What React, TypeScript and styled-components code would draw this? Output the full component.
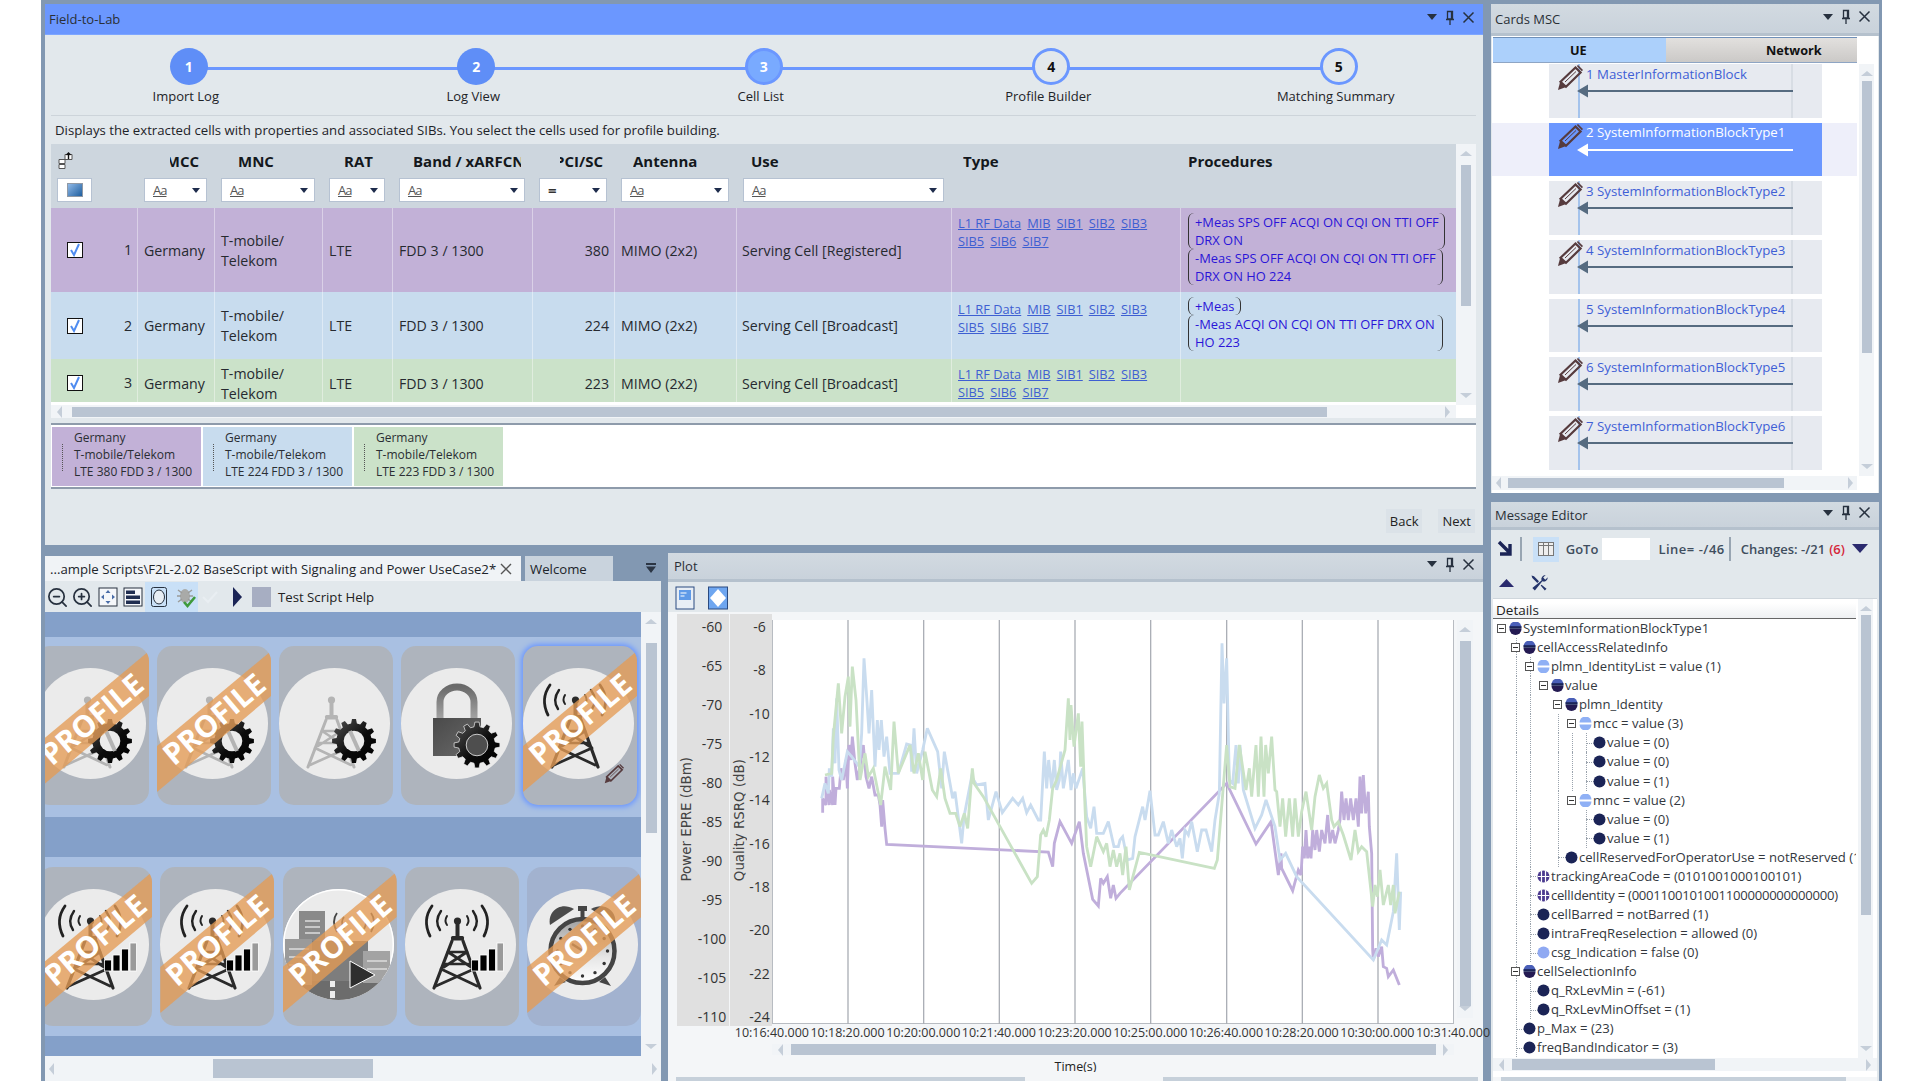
import React from "react";
import styled, { createGlobalStyle } from "styled-components";
import { ZoomIn, ZoomOut } from "lucide-react";

const FONT = `"Open Sans", "Noto Sans", "Liberation Sans", sans-serif`;

const Global = createGlobalStyle`
  html, body { margin: 0; padding: 0; background: #fff; }
  body { font-family: ${FONT}; font-size: 13px; color: #222; overflow: hidden; }
  * { box-sizing: border-box; }
`;

const Page = styled.div`
  width: 1922px; height: 1081px; overflow: hidden; background: #fff; padding-left: 41px;
`;
const Frame = styled.div`
  width: 1841px; height: 1081px; background: #8298b2; padding: 4px 3px 0 4px;
  display: grid; grid-template-columns: 1438px 388px; column-gap: 8px;
`;
const LeftColumn = styled.div`
  display: flex; flex-direction: column; gap: 8px; min-width: 0;
`;
const RightColumn = styled.div`
  display: flex; flex-direction: column; gap: 9px; min-width: 0;
`;
const BottomRow = styled.div`
  display: grid; grid-template-columns: 616px 815px; column-gap: 7px; height: 528px;
`;

/* ---------- panel chrome ---------- */
const Panel = styled.section<{ $h?: number }>`
  display: flex; flex-direction: column; background: #e2e8ec;
  ${(p) => (p.$h ? `height: ${p.$h}px;` : "flex: 1;")}
  min-height: 0;
`;
const TitleBar = styled.header<{ $active?: boolean; $h?: number; $pl?: number }>`
  flex: none; height: ${(p) => p.$h ?? 29}px; display: flex; align-items: center; justify-content: space-between;
  padding: 0 8px 0 ${(p) => p.$pl ?? 4}px; font-size: 13px; color: #2a2f36;
  background: ${(p) => (p.$active ? "#6b97ff" : "linear-gradient(#d2dae1, #c9d2db)")};
  border-bottom: ${(p) => (p.$active ? "1px solid #7ea6ff" : "3px solid #b5c1cd")};
`;
const Controls = styled.div`
  display: flex; align-items: center; gap: 7px; margin-top: -4px;
`;
function PanelControls() {
  return (
    <Controls>
      <svg width="12" height="8" viewBox="0 0 12 8"><path d="M1 1h10L6 7z" fill="#27313f" /></svg>
      <svg width="10" height="15" viewBox="0 0 10 15">
        <path d="M2.5 1.5h5v7.5h-5zM1 9.5h8M5 10v5M6.5 2v7" fill="none" stroke="#27313f" strokeWidth="1.3" />
      </svg>
      <svg width="13" height="13" viewBox="0 0 13 13">
        <path d="M1.5 1.5l10 10M11.5 1.5l-10 10" stroke="#27313f" strokeWidth="1.5" />
      </svg>
    </Controls>
  );
}

/* ---------- generic scrollbars ---------- */
const VBar = styled.div<{ $w: number; $bg?: string }>`
  flex: none; width: ${(p) => p.$w}px; display: flex; flex-direction: column; align-items: center;
  padding: 7px 0; background: ${(p) => p.$bg ?? "#f1f4f7"};
`;
const TriV = styled.i<{ $down?: boolean }>`
  flex: none; width: 0; height: 0; border-left: 6px solid transparent; border-right: 6px solid transparent;
  ${(p) => (p.$down ? "border-top: 5px solid #c5ced9;" : "border-bottom: 5px solid #c5ced9;")}
`;
const TriH = styled.i<{ $right?: boolean }>`
  flex: none; width: 0; height: 0; border-top: 6px solid transparent; border-bottom: 6px solid transparent;
  ${(p) => (p.$right ? "border-left: 5px solid #c5ced9;" : "border-right: 5px solid #c5ced9;")}
`;
const VTrack = styled.div`
  flex: 1; width: 100%; display: flex; flex-direction: column; align-items: center; min-height: 0;
`;
const VThumb = styled.div<{ $top: number; $h: number; $w: number }>`
  margin-top: ${(p) => p.$top}px; height: ${(p) => p.$h}px; width: ${(p) => p.$w}px; background: #b9c4d2;
`;
const HBar = styled.div<{ $h: number; $pad?: number }>`
  flex: none; height: ${(p) => p.$h}px; display: flex; align-items: center; padding: 0 ${(p) => p.$pad ?? 4}px;
  background: #f1f4f7;
`;
const HTrack = styled.div`
  flex: 1; height: 100%; display: flex; align-items: center; min-width: 0;
`;
const HThumb = styled.div<{ $left: number; $w: number; $h: number }>`
  margin-left: ${(p) => p.$left}px; width: ${(p) => p.$w}px; height: ${(p) => p.$h}px; background: #b9c4d2;
`;
function VScroll(p: { w: number; top: number; h: number; tw: number; bg?: string }) {
  return (
    <VBar $w={p.w} $bg={p.bg}>
      <TriV />
      <VTrack><VThumb $top={p.top} $h={p.h} $w={p.tw} /></VTrack>
      <TriV $down />
    </VBar>
  );
}
function HScroll(p: { h: number; left: number; w: number; th: number; pad?: number }) {
  return (
    <HBar $h={p.h} $pad={p.pad}>
      <TriH />
      <HTrack><HThumb $left={p.left} $w={p.w} $h={p.th} /></HTrack>
      <TriH $right />
    </HBar>
  );
}

/* ---------- stepper ---------- */
const Stepper = styled.div`
  flex: none; height: 80px; display: grid; grid-template-columns: repeat(5, 287.5px);
`;
const Step = styled.div<{ $first?: boolean }>`
  position: relative; display: flex; flex-direction: column; align-items: center; padding-top: 13px;
  &::before {
    content: ""; display: ${(p) => (p.$first ? "none" : "block")}; position: absolute;
    left: -143.75px; width: 287.5px; top: 31.5px; height: 3px; background: #6b97ff;
  }
`;
const StepDot = styled.div<{ $kind: "done" | "now" | "todo" }>`
  position: relative; z-index: 1; width: 38px; height: 37px; border-radius: 50%; display: flex; align-items: center; justify-content: center;
  font-weight: 700; font-size: 14px;
  color: ${(p) => (p.$kind === "todo" ? "#111" : "#fff")};
  background: ${(p) => (p.$kind === "done" ? "#5f8ef7" : p.$kind === "now" ? "#79aaff" : "#e2e8ec")};
  border: ${(p) => (p.$kind === "done" ? "0" : "3px solid #6b97ff")};
`;
const StepLabel = styled.div`
  margin: 2px 6px 0 0; line-height: 18px; font-size: 13px; color: #1e2328; white-space: nowrap;
`;
const Rule = styled.div`
  flex: none; height: 1px; margin: 0 7px 0 6px; background: #cdd4da;
`;
const Description = styled.div`
  flex: none; height: 28px; line-height: 28px; padding-left: 10px; font-size: 13.2px; color: #1e2328; white-space: nowrap;
`;

/* ---------- table ---------- */
const COLS = "86px 77px 108px 70px 140px 82px 122px 215px 229px 276px";
const TableArea = styled.div`
  flex: none; margin: 0 7px 0 6px; background: #fff; display: flex; flex-direction: column;
`;
const TableWrap = styled.div`
  display: flex; height: 261px;
`;
const TableGrid = styled.div`
  width: 1405px; height: 258px; overflow: hidden; display: flex; flex-direction: column;
`;
const TableHScroll = styled.div`
  width: 1405px;
`;
const HeadRow = styled.div`
  flex: none; height: 64px; display: grid; grid-template-columns: ${COLS}; background: #cdd6de;
`;
const HeadCell = styled.div`
  display: flex; flex-direction: column; min-width: 0;
`;
const HeadLabelBox = styled.div<{ $left: number; $w?: number; $end?: boolean }>`
  height: 34px; margin-left: ${(p) => p.$left}px; ${(p) => (p.$w ? `width: ${p.$w}px;` : "")}
  display: flex; align-items: center; justify-content: ${(p) => (p.$end ? "flex-end" : "flex-start")};
  overflow: hidden; white-space: nowrap; font-weight: 700; font-size: 15px; color: #14181c;
`;
const HeadLabelText = styled.span`
  flex: none;
`;
const Filter = styled.div`
  height: 24px; margin-left: 7px; width: calc(100% - 14px); background: #fff; border: 1px solid #b6c2d2;
  display: flex; align-items: center; justify-content: space-between; padding: 0 6px 0 8px;
`;
const FilterGlyph = styled.span`
  font-size: 13px; letter-spacing: -1px; color: #555; text-decoration: underline; line-height: 13px;
`;
const FilterEq = styled.span`
  font-weight: 700; font-size: 15px; color: #333; line-height: 12px;
`;
const Drop = styled.i`
  width: 0; height: 0; border-left: 4px solid transparent; border-right: 4px solid transparent; border-top: 5px solid #1e2c4c;
`;
const SelectAll = styled.div`
  height: 24px; width: 35px; margin-left: 6px; background: #fff; border: 1px solid #b6c2d2;
  display: flex; align-items: center; justify-content: center;
`;
const SelectSwatch = styled.div`
  width: 16px; height: 14px; background: linear-gradient(135deg, #8fb8e6, #1f5f9f); border: 1px solid #9099a5;
`;
const HeadIcon = styled.div`
  height: 34px; padding: 8px 0 0 7px;
`;
const Row = styled.div<{ $bg: string; $h: number }>`
  flex: none; height: ${(p) => p.$h}px; display: grid; grid-template-columns: ${COLS}; background: ${(p) => p.$bg};
`;
const Cell = styled.div<{ $pad?: number; $right?: boolean; $sep?: boolean }>`
  display: flex; align-items: center; min-width: 0; white-space: nowrap; font-size: 14.2px; color: #262a30;
  padding: 1px ${(p) => (p.$right ? 5 : 0)}px 0 ${(p) => p.$pad ?? 6}px;
  justify-content: ${(p) => (p.$right ? "flex-end" : "flex-start")};
  border-left: ${(p) => (p.$sep === false ? "0" : "1px solid rgba(255,255,255,.4)")};
  line-height: 20px;
`;
const CheckCell = styled(Cell)`
  justify-content: space-between; padding: 0 5px 0 16px;
`;
const CheckBox = styled.div`
  width: 16px; height: 16px; background: #fff; border: 1px solid #111; display: flex; align-items: center; justify-content: center;
`;
const LinksCell = styled.div<{ $top: number }>`
  padding: ${(p) => p.$top}px 0 0 6px; border-left: 1px solid rgba(255,255,255,.4); line-height: 18px; font-size: 12.8px;
`;
const LinkLine = styled.div`
  display: flex; gap: 6px; height: 18px;
`;
const Lnk = styled.a`
  color: #3e5fd2; text-decoration: underline;
`;
const ProcCell = styled.div`
  padding: 5px 0 0 7px; border-left: 1px solid rgba(255,255,255,.4); font-size: 12.9px; line-height: 18px; color: #2a14d8;
`;
const ProcBracket = styled.div<{ $w: number }>`
  width: ${(p) => p.$w}px; border-left: 1px solid #333; border-right: 1px solid #333; border-radius: 6px;
  padding-left: 6px; white-space: nowrap;
`;

const Chips = styled.div`
  flex: none; height: 66px; margin: 5px 7px 0 6px; display: flex; gap: 2.5px; align-items: center; padding-left: 1px;
  background: #fff; border-top: 2px solid #8e9bab; border-bottom: 2px solid #8e9bab;
`;
const Chip = styled.div<{ $bg: string }>`
  width: 148.5px; height: 59px; background: ${(p) => p.$bg}; position: relative; padding: 2px 0 0 22px;
  font-size: 12px; line-height: 17px; color: #2a2e33; white-space: nowrap;
  &::before {
    content: ""; position: absolute; left: 10px; top: 17px; height: 27px; border-left: 1px dotted #555;
  }
`;
const ActionBar = styled.div`
  flex: 1; display: flex; justify-content: flex-end; align-items: flex-start; gap: 16px; padding: 20px 8px 0 0;
`;
const ActionBtn = styled.div`
  font-size: 13px; color: #222; line-height: 24px; padding: 0 4px; background: #dbe2e8;
`;

/* ---------- script panel ---------- */
const TabStrip = styled.div`
  flex: none; height: 25px; margin-top: 3px; display: flex; align-items: stretch; gap: 4px; background: transparent;
`;
const Tab = styled.div<{ $active?: boolean; $w: number }>`
  width: ${(p) => p.$w}px; display: flex; align-items: center; justify-content: space-between; padding: 0 9px 0 5px;
  background: ${(p) => (p.$active ? "#f0f3f6" : "#c9d3dd")}; font-size: 13.2px; color: #20242a; white-space: nowrap; overflow: hidden;
`;
const TabMenu = styled.div`
  flex: 1; display: flex; align-items: center; justify-content: flex-end; padding-right: 4px;
`;
const ScriptPanel = styled.section`
  display: flex; flex-direction: column; min-width: 0; min-height: 0;
`;
const ScriptToolbar = styled.div`
  flex: none; height: 31px; background: #e2e8ec; display: flex; align-items: center; padding-top: 1px;
`;
const ToolCell = styled.div<{ $hot?: boolean; $w?: number }>`
  width: ${(p) => p.$w ?? 25}px; height: 30px; display: flex; align-items: center; justify-content: center;
  background: ${(p) => (p.$hot ? "#c9e0f7" : "transparent")};
`;
const ToolLabel = styled.span`
  font-size: 13.2px; color: #222; margin-left: 7px; white-space: nowrap;
`;
const GraySquare = styled.div`
  width: 19px; height: 20px; background: #a7aec2;
`;
const ScriptBody = styled.div`
  flex: none; height: 444px; display: flex; min-height: 0;
`;
const IconStage = styled.div`
  width: 596px; height: 444px; background: #84a0c9; padding-top: 25px; display: flex; flex-direction: column; gap: 40px; overflow: hidden;
`;
const Band = styled.div<{ $shift: number; $gap: number; $pt: number; $h: number }>`
  flex: none; height: ${(p) => p.$h}px; background: #a9c0e2; display: flex; gap: ${(p) => p.$gap}px; overflow: hidden;
  padding: ${(p) => p.$pt}px 0 0 0;
  & > :first-child { margin-left: ${(p) => p.$shift}px; }
`;
const CardTile = styled.div<{ $tone?: boolean; $sel?: boolean }>`
  flex: none; position: relative; width: 114px; height: 159px; border-radius: 15px;
  background: ${(p) => (p.$tone ? "#a2b2cf" : "#aeb4bd")};
  ${(p) => (p.$sel ? "box-shadow: 0 0 5px 2px #6b97ff;" : "")}
  overflow: visible;
`;
const CardClip = styled.div`
  position: absolute; inset: 0; border-radius: 15px; overflow: hidden;
`;
const CardArt = styled.svg`
  position: absolute; left: 0; top: 22px;
`;
const Ribbon = styled.div`
  position: absolute; inset: 0; background: rgba(228, 155, 85, 0.78);
  clip-path: polygon(114px 5px, 114px 50px, 0 146px, 0 100px);
`;
const RibbonText = styled.div`
  position: absolute; left: 57px; top: 73px; transform: translate(-50%, -50%) rotate(-40deg);
  color: #fff; font-weight: 700; font-size: 30px; line-height: 34px; white-space: nowrap;
`;
const SmallPencil = styled.div`
  position: absolute; left: 81px; top: 118px;
`;

/* ---------- plot ---------- */
const PlotBody = styled.div`
  flex: 1; display: flex; flex-direction: column; background: #f4f6f8; min-height: 0;
`;
const PlotToolbar = styled.div`
  flex: none; height: 30px; background: #e2e8ec; display: flex; align-items: center; gap: 12px; padding: 2px 0 0 6px;
`;
const ChartGrid = styled.div`
  flex: none; height: 415px; padding-top: 2px; margin-left: 9px; display: flex;
`;
const AxisCol = styled.div<{ $w: number; $pl: number }>`
  position: relative; flex: none; width: ${(p) => p.$w}px; height: 412px; background: #e0e0e0; display: flex; flex-direction: column;
  justify-content: space-between; align-items: center; padding: 4px 0 0 ${(p) => p.$pl}px; font-size: 14px; line-height: 18px; color: #333;
  & + & { border-left: 1px solid #f4f6f8; }
`;
const AxisTitle = styled.div<{ $left: number }>`
  position: absolute; left: ${(p) => p.$left}px; bottom: 145px; writing-mode: vertical-rl; transform: rotate(180deg);
  font-family: "DejaVu Sans", sans-serif; font-size: 13.4px; line-height: 16px; color: #444; white-space: nowrap;
`;
const PlotSvgBox = styled.div`
  flex: none; width: 682px; height: 404px; margin-top: 6px; background: #fff;
`;
const PlotSvg = styled.svg`
  display: block;
`;
const PlotScrollBox = styled.div`
  flex: none; height: 404px; margin: 6px 0 0 3px;
`;
const TimeAxis = styled.div`
  flex: none; height: 18px; margin: -3px 0 2px 66px; display: grid; grid-template-columns: repeat(10, 75.7px);
`;
const TimeTick = styled.div`
  text-align: center; font-size: 12.5px; line-height: 18px; color: #333; white-space: nowrap;
`;
const PlotH = styled.div`
  flex: none; margin-left: 104px; width: 682px;
`;
const TimeTitle = styled.div`
  flex: none; height: 13px; overflow: hidden; text-align: center; font-size: 12.5px; line-height: 16px;
  margin-top: 4px;
`;
const FootStrips = styled.div`
  flex: none; display: flex; justify-content: space-between; height: 4px; margin-top: auto; padding: 0 5px 0 8px; background: #f4f6f8;
`;
const FootStrip = styled.div<{ $w: number }>`
  width: ${(p) => p.$w}px; background: #c6d0da;
`;

/* ---------- MSC ---------- */
const WhiteBody = styled.div`
  flex: 1; display: flex; flex-direction: column; background: #fff; margin: 0 1px 0 1px; min-height: 0;
`;
const MscTabs = styled.div`
  flex: none; display: flex; height: 26px; margin: 1px 0 1px 1px; width: 365px;
`;
const MscTab = styled.div<{ $active?: boolean; $w: number; $pad: number }>`
  width: ${(p) => p.$w}px; height: 100%; font-weight: 700; font-size: 12.7px; color: #111; display: flex; align-items: center; padding-left: ${(p) => p.$pad}px;
  background: ${(p) => (p.$active ? "#acd0fb" : "linear-gradient(#e2e0de, #cbc9c7)")};
  border-top: 1px solid #6f8fb8; border-bottom: 1px solid #8ea5c4;
`;
const MscMain = styled.div`
  flex: none; height: 412px; display: flex; justify-content: space-between; padding-right: 4px;
`;
const MscList = styled.div`
  width: 365px; display: flex; flex-direction: column; gap: 5px; overflow: hidden; height: 408px;
`;
const MscStrip = styled.div<{ $sel?: boolean }>`
  flex: none; height: 53.7px; padding-left: 57px; background: ${(p) => (p.$sel ? "#eeeffa" : "transparent")};
`;
const MscCell = styled.div<{ $sel?: boolean }>`
  position: relative; width: 273px; height: 100%;
  background: ${(p) =>
    p.$sel
      ? "#6b97ff"
      : "linear-gradient(#a4c3ec,#a4c3ec) 29px 0/2px 100% no-repeat, linear-gradient(#d8dde4,#d8dde4) 242px 0/2px 100% no-repeat, #e7eaf0"};
  padding: 0 0 0 37px;
`;
const MscText = styled.div<{ $sel?: boolean }>`
  height: 20px; line-height: ${(p) => (p.$sel ? 18 : 20)}px; font-size: 13.25px; color: ${(p) => (p.$sel ? "#fff" : "#3f5fd6")}; white-space: nowrap;
`;
const MscArrowSvg = styled.svg`
  display: block; margin: 0 0 0 -9px;
`;
const MscPencil = styled.div`
  position: absolute; left: 8px; top: 1px;
`;
const MscHWrap = styled.div`
  width: 365px; flex: none;
`;

/* ---------- message editor ---------- */
const EditorToolbar = styled.div`
  flex: none; height: 68px; display: flex; flex-direction: column; background: #e2e8ec;
`;
const ToolRow = styled.div<{ $h: number }>`
  flex: none; height: ${(p) => p.$h}px; display: flex; align-items: center; font-weight: 600; font-size: 13px; color: #3f4e5e; white-space: nowrap;
`;
const ToolSep = styled.i<{ $h: number; $mx: string }>`
  flex: none; width: 2px; height: ${(p) => p.$h}px; background: #98a5b2; margin: ${(p) => p.$mx};
`;
const GridBtn = styled.div`
  flex: none; width: 26px; height: 25px; background: #c9e0f7; display: flex; align-items: center; justify-content: center;
`;
const GoToInput = styled.div`
  flex: none; width: 48px; height: 22px; background: #fff; margin: 0 8px 0 4px;
`;
const LineText = styled.span`
  letter-spacing: 0.5px;
`;
const RedCount = styled.span`
  color: #d5263a; margin-left: 4px;
`;
const TreeArea = styled.div`
  flex: 1; display: flex; flex-direction: column; background: #fff; margin: 0 2px 0 2px; min-height: 0; border-top: 1px solid #cfd6dc;
`;
const TreeMain = styled.div`
  flex: none; height: 459px; display: flex; justify-content: space-between; padding-right: 4px;
`;
const TreeCol = styled.div`
  width: 363px; overflow: hidden; display: flex; flex-direction: column;
`;
const TreeHead = styled.div`
  flex: none; height: 15px; line-height: 15px; font-size: 13.5px; color: #222; padding-left: 3px;
  background: linear-gradient(#fff, #eef0f2); border-bottom: 1px solid #666; margin-top: 4px; box-sizing: content-box;
`;
const TreeList = styled.div`
  padding-top: 0; flex: 1; overflow: hidden;
`;
const TreeRow = styled.div<{ $level: number; $tight?: boolean }>`
  position: relative; height: 19.07px; display: flex; align-items: center; padding-left: ${(p) => 30 + p.$level * 14}px;
  font-size: 13.1px; line-height: 19px; color: #33383e; white-space: nowrap;
  letter-spacing: ${(p) => (p.$tight ? "-0.25px" : "0")};
`;
const Guide = styled.i<{ $level: number }>`
  position: absolute; top: 0; bottom: 0; left: ${(p) => 9 + p.$level * 14}px; border-left: 1px dotted #9aa3ad;
`;
const Connector = styled.i<{ $level: number }>`
  position: absolute; top: 50%; width: 8px; left: ${(p) => 9 + p.$level * 14}px; border-top: 1px dotted #9aa3ad;
`;
const ToggleBox = styled.i<{ $level: number }>`
  position: absolute; left: ${(p) => 4 + p.$level * 14}px; top: 5px; width: 9px; height: 9px; border: 1px solid #555; background: #fff;
  &::after { content: ""; position: absolute; left: 1px; right: 1px; top: 3px; height: 1px; background: #333; }
`;
const NodeIcon = styled.svg<{ $level: number }>`
  position: absolute; left: ${(p) => 16 + p.$level * 14}px; top: 3px;
`;

/* ---------- drawings ---------- */
const Pencil = ({ size = 26 }: { size?: number }) => (
  <svg width={size} height={size} viewBox="0 0 26 26">
    <path d="M3.5 16.8L18.5 2.5 23.6 7.6 9 21.8z" fill="none" stroke="#563b3e" strokeWidth="2.2" />
    <path d="M1 25l2.2-8.5 6 5.6z" fill="#563b3e" />
    <path d="M19.8 1l1.2-1 5 5-1.2 1.3z" fill="#563b3e" />
    <path d="M8 17L19 6.5" stroke="#563b3e" strokeWidth="1" />
  </svg>
);

function gearPath(cx: number, cy: number, r: number, teeth: number) {
  const pts: string[] = [];
  const inner = r * 0.8;
  for (let i = 0; i < teeth; i++) {
    const a = (i / teeth) * Math.PI * 2;
    const w = (Math.PI / teeth) * 0.5;
    const seq: [number, number][] = [
      [inner, a - w * 1.25],
      [r, a - w * 0.7],
      [r, a + w * 0.7],
      [inner, a + w * 1.25],
    ];
    seq.forEach(([rad, ang]) => pts.push(`${(cx + rad * Math.cos(ang)).toFixed(1)},${(cy + rad * Math.sin(ang)).toFixed(1)}`));
  }
  return "M" + pts.join("L") + "Z";
}

const TowerLines = ({ c, w = 3.2 }: { c: string; w?: number }) => (
  <g stroke={c} strokeWidth={w} fill="none" strokeLinecap="round">
    <path d="M47 52L29 99M58 52L75 99" />
    <path d="M43 63H62M39 75H66M43 63L66 78M62 63L39 78M36 80L72 97M69 80L31 97" strokeWidth={w * 0.85} />
    <rect x="46" y="47" width="13" height="4.5" rx="1.5" fill={c} stroke="none" />
    <rect x="50.5" y="33" width="4" height="15" fill={c} stroke="none" />
    <circle cx="52.5" cy="32" r="3.6" fill={c} stroke="none" />
  </g>
);
const Waves = ({ c }: { c: string }) => (
  <g stroke={c} fill="none" strokeLinecap="round">
    <path d="M27 17Q17 31 25 47M77 17Q87 31 79 47" strokeWidth="2.8" />
    <path d="M36 22Q29 32 35 41M68 22Q75 32 69 41" strokeWidth="2.4" />
    <path d="M42 27Q39 32 42 36M62 27Q65 32 62 36" strokeWidth="2" />
  </g>
);
const Bars = () => (
  <g fill="#000" stroke="#fff" strokeWidth="0.8">
    <rect x="66.5" y="71" width="7" height="11" />
    <rect x="75" y="66" width="7" height="16" />
    <rect x="83.5" y="60" width="7" height="22" />
    <rect x="92" y="54" width="6.5" height="28" fill="#9a9a9a" />
  </g>
);
const Gear = ({ cx, cy, r, hole, outline }: { cx: number; cy: number; r: number; hole: string; outline?: boolean }) => (
  <g>
    <path d={gearPath(cx, cy, r, 12)} fill="url(#gearFill)" stroke={outline ? "#eee" : "none"} strokeWidth="0.7" />
    <circle cx={cx} cy={cy} r={r * 0.47} fill={hole} stroke={outline ? "#eee" : "none"} strokeWidth="0.8" />
  </g>
);

type ArtKind = "towerGear" | "lock" | "tower" | "towerBars" | "city" | "clock";

function CardPicture({ kind }: { kind: ArtKind }) {
  const disc = "#ebebeb";
  let art: React.ReactNode = null;
  if (kind === "towerGear") {
    art = (
      <>
        <TowerLines c="#b4b4b4" w={3} />
        <Gear cx={75} cy={73} r={22} hole={disc} />
        <path d="M71 63l9 20" stroke="#b4b4b4" strokeWidth="4" />
      </>
    );
  } else if (kind === "lock") {
    art = (
      <>
        <path d="M39 52V34a17 15 0 0 1 34 0V52" fill="none" stroke="url(#shackle)" strokeWidth="7" />
        <rect x="32" y="50" width="48" height="38" fill="url(#lockBody)" />
        <Gear cx={76} cy={77} r={23} hole="#4e4e4e" outline />
      </>
    );
  } else if (kind === "tower") {
    art = (
      <>
        <Waves c="#222" />
        <TowerLines c="#2a2a2a" />
      </>
    );
  } else if (kind === "towerBars") {
    art = (
      <>
        <Waves c="#222" />
        <TowerLines c="#2a2a2a" />
        <Bars />
      </>
    );
  } else if (kind === "city") {
    art = (
      <g clipPath="url(#discClip)">
        <circle cx="55.5" cy="55.5" r="55" fill="none" stroke="#fff" strokeWidth="2" />
        <path d="M0 90H111V111H0z" fill="#6c6c6c" />
        <rect x="16" y="22" width="26" height="30" fill="#8a8a8a" />
        <rect x="2" y="50" width="27" height="46" fill="#9a9a9a" />
        <rect x="29" y="52" width="56" height="40" fill="#7d7d7d" />
        <rect x="80" y="62" width="27" height="32" fill="#a3a3a3" />
        <path d="M22 32H37M22 38H37M22 44H37M6 60H26M6 68H26M6 76H26M84 72H104M84 80H104" stroke="#ddd" strokeWidth="1.4" />
        <rect x="47" y="92" width="5" height="6" fill="#eee" />
        <rect x="47" y="102" width="5" height="7" fill="#eee" />
        <path d="M67 72L92 86 67 99z" fill="#2e2e2e" stroke="#fff" strokeWidth="1" />
        <g stroke="#444" fill="none" strokeWidth="1.8">
          <path d="M54 24Q48 32 54 43M88 24Q94 32 88 43M61 28Q57 33 61 40M81 28Q85 33 81 40" />
        </g>
      </g>
    );
  } else {
    art = (
      <>
        <path d="M23 36C20 22 34 12 47 20z" fill="#4a4a4a" />
        <path d="M88 36C91 22 77 12 64 20z" fill="#4a4a4a" />
        <rect x="51" y="17" width="9" height="5" fill="#444" />
        <rect x="53.5" y="21" width="4" height="8" fill="#444" />
        <path d="M33 88l-6 9 12-4zM78 88l6 9-12-4z" fill="#444" />
        <circle cx="55.5" cy="62" r="32" fill="url(#clockFace)" stroke="#444" strokeWidth="4.5" />
        {Array.from({ length: 12 }).map((_, i) => {
          const a = (i / 12) * Math.PI * 2;
          return <circle key={i} cx={55.5 + 25 * Math.cos(a)} cy={62 + 25 * Math.sin(a)} r="1.7" fill="#333" />;
        })}
        <path d="M45 55L56 62" stroke="#444" strokeWidth="2.4" />
      </>
    );
  }
  return (
    <CardArt width="111" height="112" viewBox="0 0 111 112">
      <defs>
        <linearGradient id="gearFill" x1="0" x2="1" y1="0" y2="1">
          <stop offset="0" stopColor="#555" />
          <stop offset=".55" stopColor="#0b0b0b" />
          <stop offset="1" stopColor="#000" />
        </linearGradient>
        <linearGradient id="shackle" x1="0" x2="0" y1="0" y2="1">
          <stop offset="0" stopColor="#6a6a6a" />
          <stop offset="1" stopColor="#a6a6a6" />
        </linearGradient>
        <linearGradient id="lockBody" x1="0" x2="1" y1="0" y2="1">
          <stop offset="0" stopColor="#4a4a4a" />
          <stop offset="1" stopColor="#6a6a6a" />
        </linearGradient>
        <linearGradient id="clockFace" x1="0" x2="0" y1="0" y2="1">
          <stop offset="0" stopColor="#a0a0a0" />
          <stop offset=".6" stopColor="#e6e6e6" />
          <stop offset="1" stopColor="#fff" />
        </linearGradient>
        <clipPath id="discClip"><circle cx="55.5" cy="55.5" r="55.5" /></clipPath>
      </defs>
      <circle cx="55.5" cy="55.5" r="55.5" fill={disc} />
      {art}
    </CardArt>
  );
}

function Tile(p: { kind: ArtKind; profile?: boolean; sel?: boolean; tone?: boolean }) {
  return (
    <CardTile $sel={p.sel} $tone={p.tone}>
      <CardClip>
        <CardPicture kind={p.kind} />
        {p.profile && <Ribbon />}
        {p.profile && <RibbonText>PROFILE</RibbonText>}
      </CardClip>
      {p.sel && <SmallPencil><Pencil size={20} /></SmallPencil>}
    </CardTile>
  );
}

/* ---------- chart data ---------- */
const offset = (s: string, dx: number) =>
  s.trim().split(/\s+/).map((p) => { const [x, y] = p.split(",").map(Number); return `${x + dx},${y}`; }).join(" ");

const purpleA = `158,578 158,535 168,555 168,470 178,555 178,510 188,555 188,470 195,555 198,505 208,505 213,445 220,480 228,420 232,505 237,375 243,420 247,350 255,430 262,480 270,440 280,375 288,470 297,505 305,470 315,525 325,525 330,555 335,620 338,540 345,625 350,673 835,696 848,740 853,670 870,605 905,670 928,605 940,700 968,838 985,858 992,775 1000,790 1012,770 1022,835 1030,795 1038,835 1050,820`;
const purpleB = `320,490 408,672 453,605 475,765 483,700 485,745 518,812 535,750 543,765 548,680 553,715 558,630 563,715 568,680 573,715 578,630 585,690 590,630 598,695 605,630 615,670 623,585 630,670 638,630 645,670 655,630 660,600 665,515 672,600 678,535 685,600 692,535 700,600 708,535 715,620 720,470 725,580 730,465 737,580 745,515 748,620 755,700 758,990 760,1020 768,985 775,1010 785,980 790,1040 800,1045 805,1070 820,1050 838,1095`;
const blueA = `155,535 165,490 175,520 178,445 185,470 190,325 195,430 200,235 207,450 215,480 232,395 245,410 268,440 275,340 282,115 290,230 297,340 305,210 315,440 322,300 327,390 334,300 342,410 350,350 360,460 385,460 410,372 422,375 425,455 432,325 440,460 458,390 472,325 503,395 515,505 523,395 540,490 548,535 555,515 575,670 582,590 605,470 620,495 645,490 655,600 678,515 697,578 728,535 745,555 758,535 770,578 782,555 805,600 812,600 823,395 830,505 836,420 845,505 853,420 860,510 868,480 872,395 880,505 895,420 903,510 910,460 918,505 938,445 950,590 962,625 972,560 980,640 988,640 1000,640 1015,605 1032,680 1045,680`;
const blueB = `0,660 8,650 22,720 38,715 45,650 68,560 75,600 90,512 105,645 115,645 130,605 145,670 155,630 170,680 180,655 187,715 195,630 205,645 215,605 232,695 245,630 258,630 275,695 285,600 298,520 306,70 312,250 320,115 328,480 338,490 348,375 355,490 360,375 370,510 405,625 425,585 438,540 465,620 480,720 497,700 530,770 760,1020 785,960 800,975 820,875 830,700 838,930 842,815`;
const greenA = `165,465 185,460 190,350 205,190 215,340 225,230 235,170 240,320 247,140 258,240 270,480 285,400 295,470 310,445 332,555 345,440 362,510 372,305 385,460 420,375 432,460 445,400 458,480 465,395 487,510 500,530 512,445 525,535 540,580 557,580 570,620 583,580 593,625 607,445 612,490 640,530 785,790 802,770 812,645 820,630 828,650 838,600 848,505 860,480 885,390 895,235 900,360 903,255 912,380 925,280 932,440 936,305 945,560 950,680 962,740 980,650 1000,695 1010,670 1020,740 1030,690 1040,740 1050,700`;
const greenB = `0,700 8,765 18,680 28,810 58,697 283,745 292,720 320,375 330,500 345,505 358,375 378,510 388,445 395,530 408,375 415,530 423,350 432,530 437,375 445,460 455,350 465,510 470,515 480,620 488,535 497,650 508,535 518,650 525,535 535,650 545,575 558,515 575,630 585,530 598,465 610,505 620,490 635,600 642,620 655,605 670,645 693,720 705,630 715,695 725,680 740,695 758,860 765,795 772,830 780,750 790,855 805,795 812,855 820,795 825,880 838,815`;
const series = [
  { c: "#c0aedb", pts: purpleA + " " + offset(purpleB, 1050) },
  { c: "#c9dcef", pts: blueA + " " + offset(blueB, 1050) },
  { c: "#c9e2c5", pts: greenA + " " + offset(greenB, 1050) },
];
const gridXs = [234, 461, 688, 915, 1142, 1370, 1597, 1824];
const times = ["10:16:40.000", "10:18:20.000", "10:20:00.000", "10:21:40.000", "10:23:20.000", "10:25:00.000", "10:26:40.000", "10:28:20.000", "10:30:00.000", "10:31:40.000"];
const powerTicks = ["-60", "-65", "-70", "-75", "-80", "-85", "-90", "-95", "-100", "-105", "-110"];
const qualityTicks = ["-6", "-8", "-10", "-12", "-14", "-16", "-18", "-20", "-22", "-24"];

/* ---------- table data ---------- */
const heads = [
  { t: "MCC", left: 33, w: 29, end: true },
  { t: "MNC", left: 24 },
  { t: "RAT", left: 22 },
  { t: "Band / xARFCN", left: 21, w: 108 },
  { t: "PCI/SC", left: 28, w: 43, end: true },
  { t: "Antenna", left: 19 },
  { t: "Use", left: 15 },
];
const CheckMark = () => (
  <svg width="12" height="14" viewBox="0 0 12 14"><path d="M2 7l3 5 5-11" fill="none" stroke="#4f8cf0" strokeWidth="2" /></svg>
);

type RowData = {
  n: number; bg: string; h: number; pci: number; use: string; top: number;
  procs: { w: number; lines: string[] }[];
};
const rows: RowData[] = [
  {
    n: 1, bg: "#c2b1d7", h: 84, pci: 380, use: "Serving Cell [Registered]", top: 6,
    procs: [
      { w: 257, lines: ["+Meas SPS OFF ACQI ON CQI ON TTI OFF", "DRX ON"] },
      { w: 255, lines: ["-Meas SPS OFF ACQI ON CQI ON TTI OFF", "DRX ON HO 224"] },
    ],
  },
  {
    n: 2, bg: "#c8dcee", h: 67, pci: 224, use: "Serving Cell [Broadcast]", top: 8,
    procs: [
      { w: 53, lines: ["+Meas"] },
      { w: 255, lines: ["-Meas ACQI ON CQI ON TTI OFF DRX ON", "HO 223"] },
    ],
  },
  { n: 3, bg: "#cbe2c9", h: 48, pci: 223, use: "Serving Cell [Broadcast]", top: 6, procs: [] },
];
const msgs = [
  "1 MasterInformationBlock", "2 SystemInformationBlockType1", "3 SystemInformationBlockType2", "4 SystemInformationBlockType3",
  "5 SystemInformationBlockType4", "6 SystemInformationBlockType5", "7 SystemInformationBlockType6",
];

type Kind = "navy" | "light" | "leaf" | "leafLight" | "bits";
const tree: { l: number; k: Kind; t: string; tog?: boolean; tight?: boolean; g: number[] }[] = [
  { l: 0, k: "navy", t: "SystemInformationBlockType1", tog: true, g: [] },
  { l: 1, k: "navy", t: "cellAccessRelatedInfo", tog: true, g: [1] },
  { l: 2, k: "light", t: "plmn_IdentityList = value (1)", tog: true, g: [1, 2] },
  { l: 3, k: "navy", t: "value", tog: true, g: [1, 2] },
  { l: 4, k: "navy", t: "plmn_Identity", tog: true, g: [1, 2] },
  { l: 5, k: "light", t: "mcc = value (3)", tog: true, g: [1, 2, 4] },
  { l: 6, k: "leaf", t: "value = (0)", g: [1, 2, 4, 5, 6] },
  { l: 6, k: "leaf", t: "value = (0)", g: [1, 2, 4, 5, 6] },
  { l: 6, k: "leaf", t: "value = (1)", g: [1, 2, 4, 5, 6] },
  { l: 5, k: "light", t: "mnc = value (2)", tog: true, g: [1, 2, 4] },
  { l: 6, k: "leaf", t: "value = (0)", g: [1, 2, 4, 6] },
  { l: 6, k: "leaf", t: "value = (1)", g: [1, 2, 4, 6] },
  { l: 4, k: "leaf", t: "cellReservedForOperatorUse = notReserved (1)", g: [1, 2, 4] },
  { l: 2, k: "bits", t: "trackingAreaCode = (0101001000100101)", g: [1, 2] },
  { l: 2, k: "bits", t: "cellIdentity = (0001100101001100000000000000)", tight: true, g: [1, 2] },
  { l: 2, k: "leaf", t: "cellBarred = notBarred (1)", g: [1, 2] },
  { l: 2, k: "leaf", t: "intraFreqReselection = allowed (0)", g: [1, 2] },
  { l: 2, k: "leafLight", t: "csg_Indication = false (0)", g: [1, 2] },
  { l: 1, k: "navy", t: "cellSelectionInfo", tog: true, g: [1] },
  { l: 2, k: "leaf", t: "q_RxLevMin = (-61)", g: [1, 2] },
  { l: 2, k: "leaf", t: "q_RxLevMinOffset = (1)", g: [1, 2] },
  { l: 1, k: "leaf", t: "p_Max = (23)", g: [1] },
  { l: 1, k: "leaf", t: "freqBandIndicator = (3)", g: [1] },
];

function TreeIcon({ k, level }: { k: Kind; level: number }) {
  const navy = "#1b2456";
  return (
    <NodeIcon $level={level} width="13" height="13" viewBox="0 0 13 13">
      {k === "leaf" && <circle cx="6.5" cy="6.5" r="6" fill={navy} />}
      {k === "leafLight" && <circle cx="6.5" cy="6.5" r="6" fill="#8fa9f2" />}
      {k === "navy" && (
        <>
          <path d="M.5 5.5a6 6 0 0 1 12 0z" fill="#4a5fb8" />
          <path d="M.5 7h12a6 6 0 0 1-12 0z" fill="#241a52" />
          <rect x=".5" y="4.2" width="12" height="2.6" fill={navy} />
        </>
      )}
      {k === "light" && (
        <>
          <path d="M.5 5.5a6 6 0 0 1 12 0z" fill="#8fb0f5" />
          <path d="M.5 7.5h12a6 6 0 0 1-12 0z" fill="#8fb0f5" />
        </>
      )}
      {k === "bits" && (
        <>
          <circle cx="6.5" cy="6.5" r="6" fill="#4b3a8f" />
          <path d="M.5 6.5h12M4.5 1v11M8.5 1v11" stroke="#fff" strokeWidth="1.2" />
        </>
      )}
    </NodeIcon>
  );
}

export default function App() {
  return (
    <Page>
      <Global />
      <Frame>
        <LeftColumn>
          <Panel $h={541}>
            <TitleBar $active $h={31}>Field-to-Lab<PanelControls /></TitleBar>
            <Stepper>
              {[
                ["1", "Import Log", "done"], ["2", "Log View", "done"], ["3", "Cell List", "now"],
                ["4", "Profile Builder", "todo"], ["5", "Matching Summary", "todo"],
              ].map(([n, t, k], i) => (
                <Step key={n} $first={i === 0}>
                  <StepDot $kind={k as any}>{n}</StepDot>
                  <StepLabel>{t}</StepLabel>
                </Step>
              ))}
            </Stepper>
            <Rule />
            <Description>Displays the extracted cells with properties and associated SIBs. You select the cells used for profile building.</Description>
            <TableArea>
              <TableWrap>
                <TableGrid>
                  <HeadRow>
                    <HeadCell>
                      <HeadIcon>
                        <svg width="16" height="18" viewBox="0 0 16 18">
                          <path d="M1 7.5h6v4H1zM1 12.5h6v4H1zM7 2.5h7v5H7z" fill="#fff" stroke="#555" />
                          <path d="M10.5 7V1M8.5 3l2-2 2 2" stroke="#111" fill="none" strokeWidth="1.4" />
                        </svg>
                      </HeadIcon>
                      <SelectAll><SelectSwatch /></SelectAll>
                    </HeadCell>
                    {heads.map((h) => (
                      <HeadCell key={h.t}>
                        <HeadLabelBox $left={h.left} $w={h.w} $end={h.end}><HeadLabelText>{h.t}</HeadLabelText></HeadLabelBox>
                        <Filter>
                          {h.t === "PCI/SC" ? <FilterEq>=</FilterEq> : <FilterGlyph>Aa</FilterGlyph>}
                          <Drop />
                        </Filter>
                      </HeadCell>
                    ))}
                    <HeadCell><HeadLabelBox $left={12}>Type</HeadLabelBox></HeadCell>
                    <HeadCell><HeadLabelBox $left={8}>Procedures</HeadLabelBox></HeadCell>
                  </HeadRow>
                  {rows.map((r) => (
                    <Row key={r.n} $bg={r.bg} $h={r.h}>
                      <CheckCell $sep={false}>
                        <CheckBox><CheckMark /></CheckBox>
                        <span>{r.n}</span>
                      </CheckCell>
                      <Cell>Germany</Cell>
                      <Cell>T-mobile/<br />Telekom</Cell>
                      <Cell>LTE</Cell>
                      <Cell>FDD 3 / 1300</Cell>
                      <Cell $right>{r.pci}</Cell>
                      <Cell>MIMO (2x2)</Cell>
                      <Cell $pad={5}>{r.use}</Cell>
                      <LinksCell $top={r.top}>
                        <LinkLine><Lnk>L1 RF Data</Lnk><Lnk>MIB</Lnk><Lnk>SIB1</Lnk><Lnk>SIB2</Lnk><Lnk>SIB3</Lnk></LinkLine>
                        <LinkLine><Lnk>SIB5</Lnk><Lnk>SIB6</Lnk><Lnk>SIB7</Lnk></LinkLine>
                      </LinksCell>
                      <ProcCell>
                        {r.procs.map((p, i) => (
                          <ProcBracket key={i} $w={p.w}>
                            {p.lines.map((l) => <div key={l}>{l}</div>)}
                          </ProcBracket>
                        ))}
                      </ProcCell>
                    </Row>
                  ))}
                </TableGrid>
                <VScroll w={20} top={9} h={141} tw={10} />
              </TableWrap>
              <TableHScroll><HScroll h={13} left={10} w={1255} th={10} pad={6} /></TableHScroll>
            </TableArea>
            <Chips>
              <Chip $bg="#c2b1d7">Germany<br />T-mobile/Telekom<br />LTE 380 FDD 3 / 1300</Chip>
              <Chip $bg="#c8dcee">Germany<br />T-mobile/Telekom<br />LTE 224 FDD 3 / 1300</Chip>
              <Chip $bg="#cbe2c9">Germany<br />T-mobile/Telekom<br />LTE 223 FDD 3 / 1300</Chip>
            </Chips>
            <ActionBar>
              <ActionBtn>Back</ActionBtn>
              <ActionBtn>Next</ActionBtn>
            </ActionBar>
          </Panel>

          <BottomRow>
            <ScriptPanel>
              <TabStrip>
                <Tab $active $w={476}>
                  <span>...ample Scripts\F2L-2.02 BaseScript with Signaling and Power UseCase2*</span>
                  <svg width="12" height="12" viewBox="0 0 12 12"><path d="M1 1l10 10M11 1L1 11" stroke="#555" strokeWidth="1.4" /></svg>
                </Tab>
                <Tab $w={88}>Welcome</Tab>
                <TabMenu>
                  <svg width="12" height="11" viewBox="0 0 12 11"><path d="M1 0h10v2H1zM1 3.5h10L6 10z" fill="#2b3544" /></svg>
                </TabMenu>
              </TabStrip>
              <ScriptToolbar>
                <ToolCell><ZoomOut size={23} color="#27313f" strokeWidth={1.8} /></ToolCell>
                <ToolCell><ZoomIn size={23} color="#27313f" strokeWidth={1.8} /></ToolCell>
                <ToolCell>
                  <svg width="20" height="20" viewBox="0 0 20 20">
                    <rect x="1" y="1" width="18" height="18" fill="#f5f7fa" stroke="#27313f" />
                    <path d="M10 3l2.5 3h-5zM10 17l2.5-3h-5zM3 10l3-2.5v5zM17 10l-3-2.5v5z" fill="#4a6da8" />
                  </svg>
                </ToolCell>
                <ToolCell>
                  <svg width="20" height="20" viewBox="0 0 20 20">
                    <rect x="1" y="1" width="18" height="18" fill="#f5f7fa" stroke="#27313f" />
                    <path d="M3 3.5h9v3.5H3zM3 8.5h14V12H3zM3 13.5h14V17H3z" fill="#1f2d50" />
                  </svg>
                </ToolCell>
                <ToolCell $hot $w={28}>
                  <svg width="18" height="22" viewBox="0 0 18 22">
                    <rect x="1.5" y="1.5" width="15" height="19" rx="2" fill="none" stroke="#27313f" />
                    <ellipse cx="9" cy="11" rx="5.5" ry="7" fill="#e8eef5" stroke="#27313f" />
                  </svg>
                </ToolCell>
                <ToolCell $hot $w={25}>
                  <svg width="22" height="24" viewBox="0 0 22 24">
                    <ellipse cx="10" cy="11" rx="5" ry="7" fill="#a9aaa8" />
                    <path d="M3 5l4 3M17 5l-4 3M2 11h4M18 11h-4M3 17l4-3M17 17l-4-3" stroke="#9a9b99" strokeWidth="1.4" />
                    <path d="M9 17l3.5 4L20 12" fill="none" stroke="#3e9a3c" strokeWidth="2.6" />
                  </svg>
                </ToolCell>
                <ToolCell $w={24}>
                  <svg width="18" height="14" viewBox="0 0 18 14"><path d="M2 7l5 5L16 2" fill="none" stroke="#e9eef2" strokeWidth="2" /></svg>
                </ToolCell>
                <ToolCell $w={30}>
                  <svg width="11" height="22" viewBox="0 0 11 22"><path d="M1 1l9 10-9 10z" fill="#1b2456" /></svg>
                </ToolCell>
                <GraySquare />
                <ToolLabel>Test Script Help</ToolLabel>
              </ScriptToolbar>
              <ScriptBody>
                <IconStage>
                  <Band $shift={-10} $gap={8} $pt={9} $h={180}>
                    <Tile kind="towerGear" profile />
                    <Tile kind="towerGear" profile />
                    <Tile kind="towerGear" />
                    <Tile kind="lock" />
                    <Tile kind="tower" profile sel />
                  </Band>
                  <Band $shift={-7} $gap={8.3} $pt={10} $h={179}>
                    <Tile kind="towerBars" profile />
                    <Tile kind="towerBars" profile />
                    <Tile kind="city" profile />
                    <Tile kind="towerBars" />
                    <Tile kind="clock" profile tone />
                  </Band>
                </IconStage>
                <VScroll w={20} top={19} h={190} tw={11} />
              </ScriptBody>
              <HScroll h={25} left={159} w={160} th={19} />
            </ScriptPanel>

            <Panel>
              <TitleBar $h={29} $pl={6}>Plot<PanelControls /></TitleBar>
              <PlotBody>
                <PlotToolbar>
                  <svg width="22" height="24" viewBox="0 0 22 24">
                    <rect x="2" y="1" width="18" height="22" fill="#e8eef5" stroke="#2a4a80" />
                    <rect x="5" y="4" width="12" height="10" fill="#5f9ae8" />
                    <path d="M6.5 7h6M6.5 10h4" stroke="#fff" strokeWidth="1.2" />
                  </svg>
                  <svg width="20" height="24" viewBox="0 0 20 24">
                    <rect x=".5" y="1" width="19" height="22" fill="#6ea6f0" stroke="#2a4a80" />
                    <path d="M10 3l8 9-8 9-8-9z" fill="#fff" />
                  </svg>
                </PlotToolbar>
                <ChartGrid>
                  <AxisCol $w={52} $pl={18}>
                    {powerTicks.map((t) => <span key={t}>{t}</span>)}
                    <AxisTitle $left={2}>Power EPRE (dBm)</AxisTitle>
                  </AxisCol>
                  <AxisCol $w={43} $pl={17}>
                    {qualityTicks.map((t) => <span key={t}>{t}</span>)}
                    <AxisTitle $left={2}>Quality RSRQ (dB)</AxisTitle>
                  </AxisCol>
                  <PlotSvgBox>
                    <PlotSvg width="682" height="404" viewBox="6 0 2046 1212" preserveAspectRatio="none">
                      <path d="M6 0V1212H2052V0" fill="none" stroke="#b8bcc2" strokeWidth="6" />
                      {gridXs.map((x) => <line key={x} x1={x} x2={x} y1="0" y2="1212" stroke="#abafb6" strokeWidth="4" />)}
                      {series.map((s) => (
                        <polyline key={s.c} points={s.pts} fill="none" stroke={s.c} strokeWidth="8.5" strokeLinejoin="miter" strokeMiterlimit={3} />
                      ))}
                    </PlotSvg>
                  </PlotSvgBox>
                  <PlotScrollBox>
                    <VScroll w={16} top={9} h={365} tw={11} />
                  </PlotScrollBox>
                </ChartGrid>
                <TimeAxis>
                  {times.map((t) => <TimeTick key={t}>{t}</TimeTick>)}
                </TimeAxis>
                <PlotH><HScroll h={11} left={8} w={645} th={11} pad={6} /></PlotH>
                <TimeTitle>Time(s)</TimeTitle>
                <FootStrips><FootStrip $w={349} /><FootStrip $w={315} /></FootStrips>
              </PlotBody>
            </Panel>
          </BottomRow>
        </LeftColumn>

        <RightColumn>
          <Panel $h={489}>
            <TitleBar $h={32}>Cards MSC<PanelControls /></TitleBar>
            <WhiteBody>
              <MscTabs>
                <MscTab $active $w={173} $pad={77}>UE</MscTab>
                <MscTab $w={191} $pad={100}>Network</MscTab>
              </MscTabs>
              <MscMain>
                <MscList>
                  {msgs.map((m, i) => {
                    const sel = i === 1;
                    return (
                      <MscStrip key={m} $sel={sel}>
                        <MscCell $sel={sel}>
                          {i !== 4 && <MscPencil><Pencil /></MscPencil>}
                          <MscText $sel={sel}>{m}</MscText>
                          <MscArrowSvg width="217" height="14" viewBox="0 0 217 14">
                            <path d="M0 7L11 0.5V6H216V8H11V13.5z" fill={sel ? "#fff" : "#566b80"} />
                          </MscArrowSvg>
                        </MscCell>
                      </MscStrip>
                    );
                  })}
                </MscList>
                <VScroll w={15} top={5} h={272} tw={10} />
              </MscMain>
              <MscHWrap><HScroll h={14} left={7} w={276} th={10} /></MscHWrap>
            </WhiteBody>
          </Panel>

          <Panel>
            <TitleBar $h={28}>Message Editor<PanelControls /></TitleBar>
            <EditorToolbar>
              <ToolRow $h={38}>
                <svg width="26" height="18" viewBox="0 0 26 18">
                  <path d="M8 2l11 11M19 4v10H9" fill="none" stroke="#1b2456" strokeWidth="3.4" />
                </svg>
                <ToolSep $h={24} $mx="0 11px 0 3px" />
                <GridBtn>
                  <svg width="16" height="14" viewBox="0 0 16 14">
                    <rect x=".5" y=".5" width="15" height="13" fill="#eee" stroke="#777" />
                    <path d="M1 3.5h14M5.5 1v12M10.5 1v12" stroke="#777" />
                  </svg>
                </GridBtn>
                <span>&nbsp;&nbsp;GoTo</span>
                <GoToInput />
                <LineText>Line= -/46</LineText>
                <ToolSep $h={24} $mx="0 10px 0 4px" />
                <span>Changes: -/21</span>
                <RedCount>(6)</RedCount>
                <svg width="30" height="12" viewBox="0 0 30 12"><path d="M7 1h16l-8 9z" fill="#2a2a6e" /></svg>
              </ToolRow>
              <ToolRow $h={30}>
                <svg width="38" height="14" viewBox="0 0 38 14"><path d="M8 11h15l-7.5-8z" fill="#2a2a6e" /></svg>
                <svg width="20" height="20" viewBox="0 0 24 24">
                  <path d="M15 9a5 5 0 0 1 5-6.5l-3 3 2.5 2.5 3-3a5 5 0 0 1-6.5 5L7 21l-3-3z" fill="#24346b" />
                  <path d="M3 3l3 1 6 6-2 2-6-6zM14 15l5 6 2-2-6-5z" fill="#24346b" />
                </svg>
              </ToolRow>
            </EditorToolbar>
            <TreeArea>
              <TreeMain>
                <TreeCol>
                  <TreeHead>Details</TreeHead>
                  <TreeList>
                    {tree.map((n, i) => (
                      <TreeRow key={i} $level={n.l} $tight={n.tight}>
                        {n.g.map((g) => <Guide key={g} $level={g} />)}
                        {!n.tog && <Connector $level={n.l} />}
                        {n.tog && <ToggleBox $level={n.l} />}
                        <TreeIcon k={n.k} level={n.l} />
                        {n.t}
                      </TreeRow>
                    ))}
                  </TreeList>
                </TreeCol>
                <VScroll w={15} top={4} h={300} tw={10} />
              </TreeMain>
              <HScroll h={13} left={8} w={203} th={11} pad={6} />
              <FootStrips><FootStrip $w={345} /></FootStrips>
            </TreeArea>
          </Panel>
        </RightColumn>
      </Frame>
    </Page>
  );
}
